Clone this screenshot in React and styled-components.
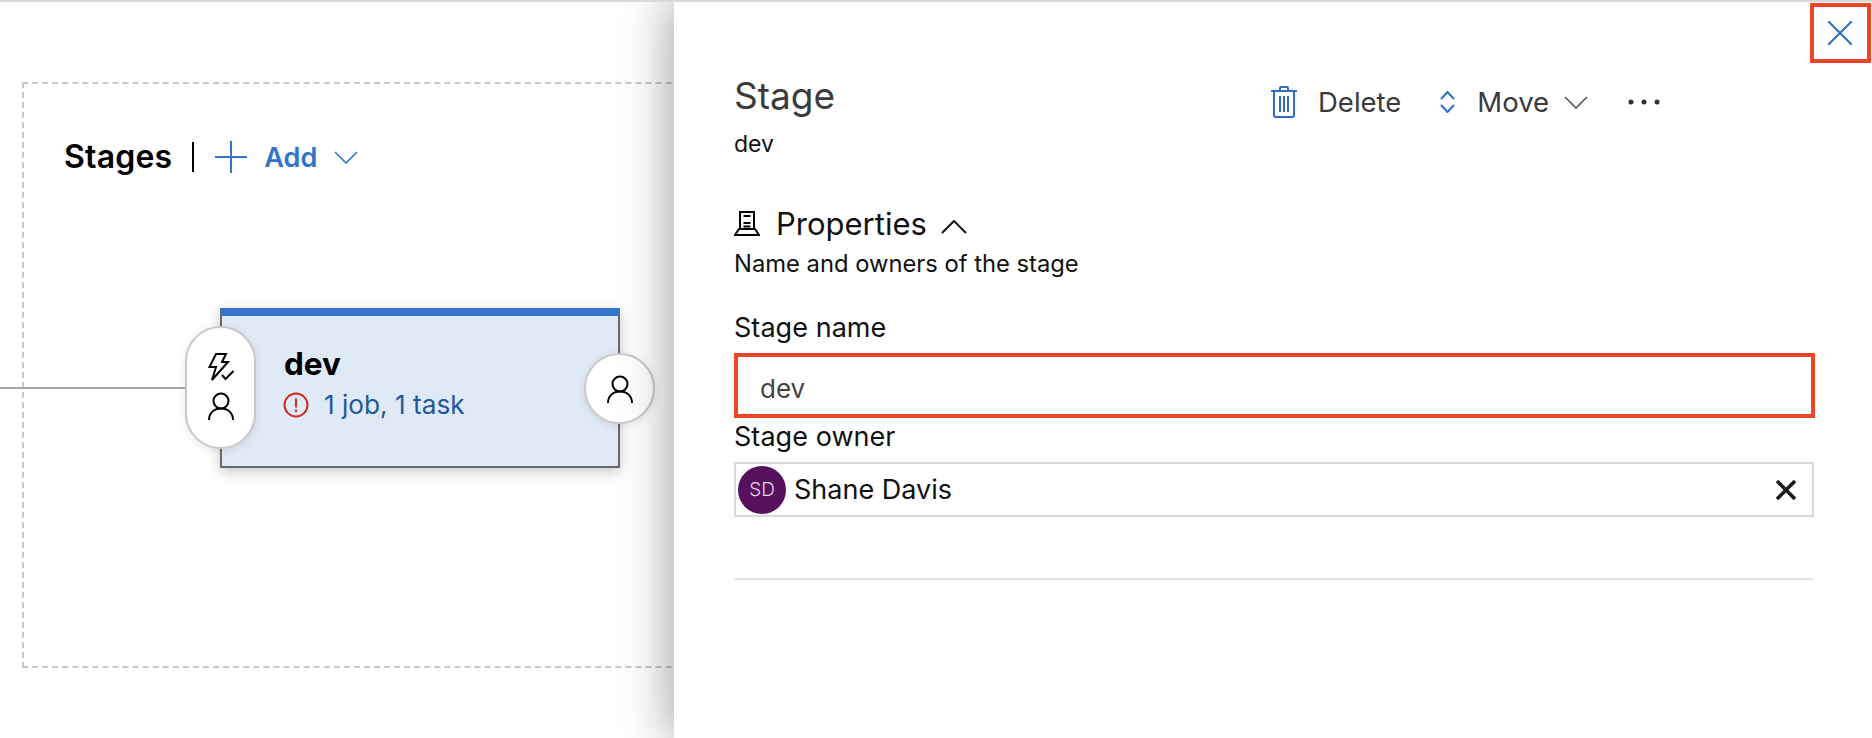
import React from 'react'
import styled, { createGlobalStyle } from 'styled-components'

const GlobalStyle = createGlobalStyle`
  html, body { margin: 0; padding: 0; background: #fff; }
  body { font-family: Inter, "Noto Sans", "Liberation Sans", sans-serif; }
`

const Page = styled.div`
  display: flex;
  width: 1872px;
  height: 738px;
  box-sizing: border-box;
  border-top: 2px solid #d8d8d8;
  overflow: hidden;
  position: relative;
`

const Canvas = styled.div`
  position: relative;
  width: 674px;
  flex: none;
  padding: 80px 0 0 22px;
  box-sizing: border-box;
`

const Frame = styled.div`
  width: 720px;
  height: 586px;
  box-sizing: border-box;
  border: 2px dashed #c8c8c8;
  padding: 56px 0 0 40px;
`

const StagesBar = styled.div`
  display: flex;
  align-items: center;
  height: 34px;
`

const StagesTitle = styled.span`
  font-size: 32px;
  font-weight: 600;
  letter-spacing: 0.2px;
  color: #000;
  line-height: 34px;
`

const Divider = styled.span`
  width: 2px;
  height: 30px;
  background: #000;
  margin: 0 21px 0 20px;
`

const AddLabel = styled.span`
  font-size: 27px;
  font-weight: 600;
  color: #3274c9;
  margin: 0 17px;
`

const Connector = styled.div`
  position: absolute;
  left: 0;
  top: 385px;
  width: 190px;
  height: 2px;
  background: #a6a6a6;
`

const StageCard = styled.div`
  position: absolute;
  left: 220px;
  top: 306px;
  width: 400px;
  height: 160px;
  box-sizing: border-box;
  background: #dfeaf6;
  border: 2px solid #69696b;
  border-top: 8px solid #3575cc;
  box-shadow: 0 4px 12px rgba(0, 0, 0, 0.22);
  padding: 28px 0 0 62px;
`

const StageName = styled.div`
  font-size: 31.5px;
  font-weight: 700;
  line-height: 40px;
  color: #000;
`

const StageMeta = styled.div`
  display: flex;
  align-items: center;
  gap: 15px;
  margin: 5px 0 0 -1px;
  font-size: 26.2px;
  line-height: 32px;
  color: #22599c;
`

const Bubble = styled.div`
  position: absolute;
  display: flex;
  flex-direction: column;
  align-items: center;
  justify-content: center;
  gap: ${p => p.$gap || 0}px;
  width: 71px;
  height: ${p => p.$tall ? 123 : 71}px;
  left: ${p => p.$side === 'left' ? '-37px' : 'auto'};
  right: ${p => p.$side === 'right' ? '-37px' : 'auto'};
  top: ${p => p.$tall ? 10 : 37}px;
  padding-bottom: ${p => p.$tall ? 3 : 0}px;
  box-sizing: border-box;
  border: 2px solid #c9c9c9;
  border-radius: 36px;
  background: #fff;
  box-shadow: 0 2px 8px rgba(0, 0, 0, 0.1);
`

const Panel = styled.section`
  position: relative;
  flex: 1;
  background: #fff;
  box-shadow: -4px 0 44px 2px rgba(0, 0, 0, 0.34);
  padding: 71px 57px 0 60px;
  box-sizing: border-box;
`

const CloseButton = styled.button`
  position: absolute;
  top: 1px;
  right: 1px;
  width: 61px;
  height: 60px;
  box-sizing: border-box;
  border: 4px solid #ef4426;
  background: #fff;
  padding: 0 2px 0 0;
  display: flex;
  align-items: center;
  justify-content: center;
`

const HeadRow = styled.div`
  display: flex;
  align-items: flex-start;
`

const TitleBlock = styled.div`
  width: 537px;
  flex: none;
`

const Title = styled.div`
  font-size: 37px;
  font-weight: 400;
  line-height: 46px;
  color: #3b3b3b;
`

const Sub = styled.div`
  font-size: 23px;
  line-height: 30px;
  color: #111;
  margin-top: 10px;
`

const Toolbar = styled.div`
  display: flex;
  align-items: center;
  height: 34px;
  margin-top: 12px;
`

const ToolLabel = styled.span`
  font-size: 27.5px;
  line-height: 34px;
  color: #3a3a3a;
  margin: ${p => p.$margin};
`

const ToolGroup = styled.div`
  display: flex;
  align-items: center;
  margin-left: ${p => p.$left || 0}px;
`

const SectionRow = styled.div`
  display: flex;
  align-items: center;
  height: 40px;
  margin-top: 44px;
`

const SectionName = styled.span`
  font-size: 31px;
  color: #111;
  margin: 0 14px 0 16px;
`

const Hint = styled.div`
  font-size: 23.75px;
  line-height: 30px;
  color: #111;
  margin-top: 6px;
`

const FieldLabel = styled.div`
  font-size: 27px;
  letter-spacing: 0.05px;
  line-height: 30px;
  color: #111;
  margin-top: ${p => p.$top}px;
`

const NameBox = styled.div`
  height: 65px;
  box-sizing: border-box;
  margin-top: 10px;
  border: 4px solid #ef4426;
  padding: 5px 0 0 22px;
  display: flex;
  align-items: center;
  font-size: 26px;
  color: #444;
`

const OwnerBox = styled.div`
  height: 55px;
  box-sizing: border-box;
  margin: 10px 1px 0 0;
  border: 2px solid #d8d8d8;
  padding: 0 15px 0 2px;
  display: flex;
  align-items: center;
`

const Avatar = styled.div`
  width: 48px;
  height: 48px;
  flex: none;
  border-radius: 50%;
  background: #56105c;
  color: #e3d6e6;
  font-size: 19px;
  font-weight: 300;
  display: flex;
  align-items: center;
  justify-content: center;
`

const OwnerName = styled.span`
  flex: 1;
  font-size: 27px;
  color: #111;
  margin-left: 8px;
`

const Rule = styled.div`
  height: 2px;
  background: #e6e6e6;
  margin: 61px 1px 0 0;
`

const Svg = styled.svg`
  flex: none;
  display: block;
  margin-top: ${p => p.$top || 0}px;
`

const Line = ({ w, h, children, sw = 2, color = 'currentColor', top }) => (
  <Svg width={w} height={h} viewBox={`0 0 ${w} ${h}`} fill="none" stroke={color} strokeWidth={sw} $top={top}>
    {children}
  </Svg>
)

const PersonIcon = () => (
  <Line w={26} h={28} color="#000">
    <circle cx="13" cy="9" r="7.5" />
    <path d="M1 28c0-7 5-11.5 12-11.5S25 21 25 28" />
  </Line>
)

const TriggerIcon = () => (
  <Line w={28} h={28} color="#000">
    <path d="M9 1h10l-4 8h6L5 27l4-13H2.5z" />
    <path d="M15 22l3.5 4 8-8" />
  </Line>
)

const WarnIcon = () => (
  <Line w={26} h={26} color="#cf2a1e">
    <circle cx="13" cy="13" r="11.5" />
    <path d="M13 6.5v9M13 17.5v2.5" />
  </Line>
)

const Chevron = ({ w, h, color, up, sw = 1.6, top }) => (
  <Line w={w} h={h} color={color} sw={sw} top={top}>
    <path d={up ? `M1 ${h - 1}L${w / 2} 1L${w - 1} ${h - 1}` : `M1 1L${w / 2} ${h - 1}L${w - 1} 1`} />
  </Line>
)

const TrashIcon = () => (
  <Line w={26} h={32} color="#2f6fbf">
    <path d="M0 5h26M9 5V2a1 1 0 0 1 1-1h6a1 1 0 0 1 1 1v3" />
    <path d="M3 5v24a2 2 0 0 0 2 2h16a2 2 0 0 0 2-2V5" />
    <path d="M9 10v16M13 10v16M17 10v16" />
  </Line>
)

const MoveIcon = () => (
  <Line w={15} h={22} color="#2f6fbf">
    <path d="M1 8l6.5-7L14 8M1 14l6.5 7L14 14" />
  </Line>
)

const PropsIcon = () => (
  <Line w={26} h={26} color="#000">
    <path d="M6 19V2h14v17" />
    <path d="M9.5 6h7M9.5 13h7M9.5 16.5h7" />
    <path d="M5 19l-4 6h24l-4-6z" />
  </Line>
)

const MoreIcon = () => (
  <Line w={32} h={6} color="#333" sw={0}>
    <g fill="#333">
      <circle cx="3" cy="3" r="2.5" />
      <circle cx="16" cy="3" r="2.5" />
      <circle cx="29" cy="3" r="2.5" />
    </g>
  </Line>
)

const App = () => (
  <Page>
    <GlobalStyle />
    <Canvas>
      <Frame>
        <StagesBar>
          <StagesTitle>Stages</StagesTitle>
          <Divider />
          <Line w={32} h={32} color="#3274c9"><path d="M16 0v32M0 16h32" /></Line>
          <AddLabel>Add</AddLabel>
          <Chevron w={24} h={13} color="#3274c9" />
        </StagesBar>
      </Frame>
      <Connector />
      <StageCard>
        <StageName>dev</StageName>
        <StageMeta><WarnIcon />1 job, 1 task</StageMeta>
        <Bubble $side="left" $tall $gap={11}><TriggerIcon /><PersonIcon /></Bubble>
        <Bubble $side="right"><PersonIcon /></Bubble>
      </StageCard>
    </Canvas>
    <Panel>
      <CloseButton aria-label="Close">
        <Line w={24} h={24} color="#2f6fbf"><path d="M0 0l24 24M24 0L0 24" /></Line>
      </CloseButton>
      <HeadRow>
        <TitleBlock>
          <Title>Stage</Title>
          <Sub>dev</Sub>
        </TitleBlock>
        <Toolbar>
          <ToolGroup>
            <TrashIcon />
            <ToolLabel $margin="0 0 0 21px">Delete</ToolLabel>
          </ToolGroup>
          <ToolGroup $left={39}>
            <MoveIcon />
            <ToolLabel $margin="0 15px 0 22px">Move</ToolLabel>
            <Chevron w={24} h={13} color="#555" />
          </ToolGroup>
          <ToolGroup $left={40}>
            <MoreIcon />
          </ToolGroup>
        </Toolbar>
      </HeadRow>
      <SectionRow>
        <PropsIcon />
        <SectionName>Properties</SectionName>
        <Chevron w={26} h={14} color="#111" up sw={2} top={7} />
      </SectionRow>
      <Hint>Name and owners of the stage</Hint>
      <FieldLabel $top={34}>Stage name</FieldLabel>
      <NameBox>dev</NameBox>
      <FieldLabel $top={4}>Stage owner</FieldLabel>
      <OwnerBox>
        <Avatar>SD</Avatar>
        <OwnerName>Shane Davis</OwnerName>
        <Line w={22} h={22} color="#1a1a1a" sw={3.6}><path d="M2 2l18 18M20 2L2 20" /></Line>
      </OwnerBox>
      <Rule />
    </Panel>
  </Page>
)

export default App
